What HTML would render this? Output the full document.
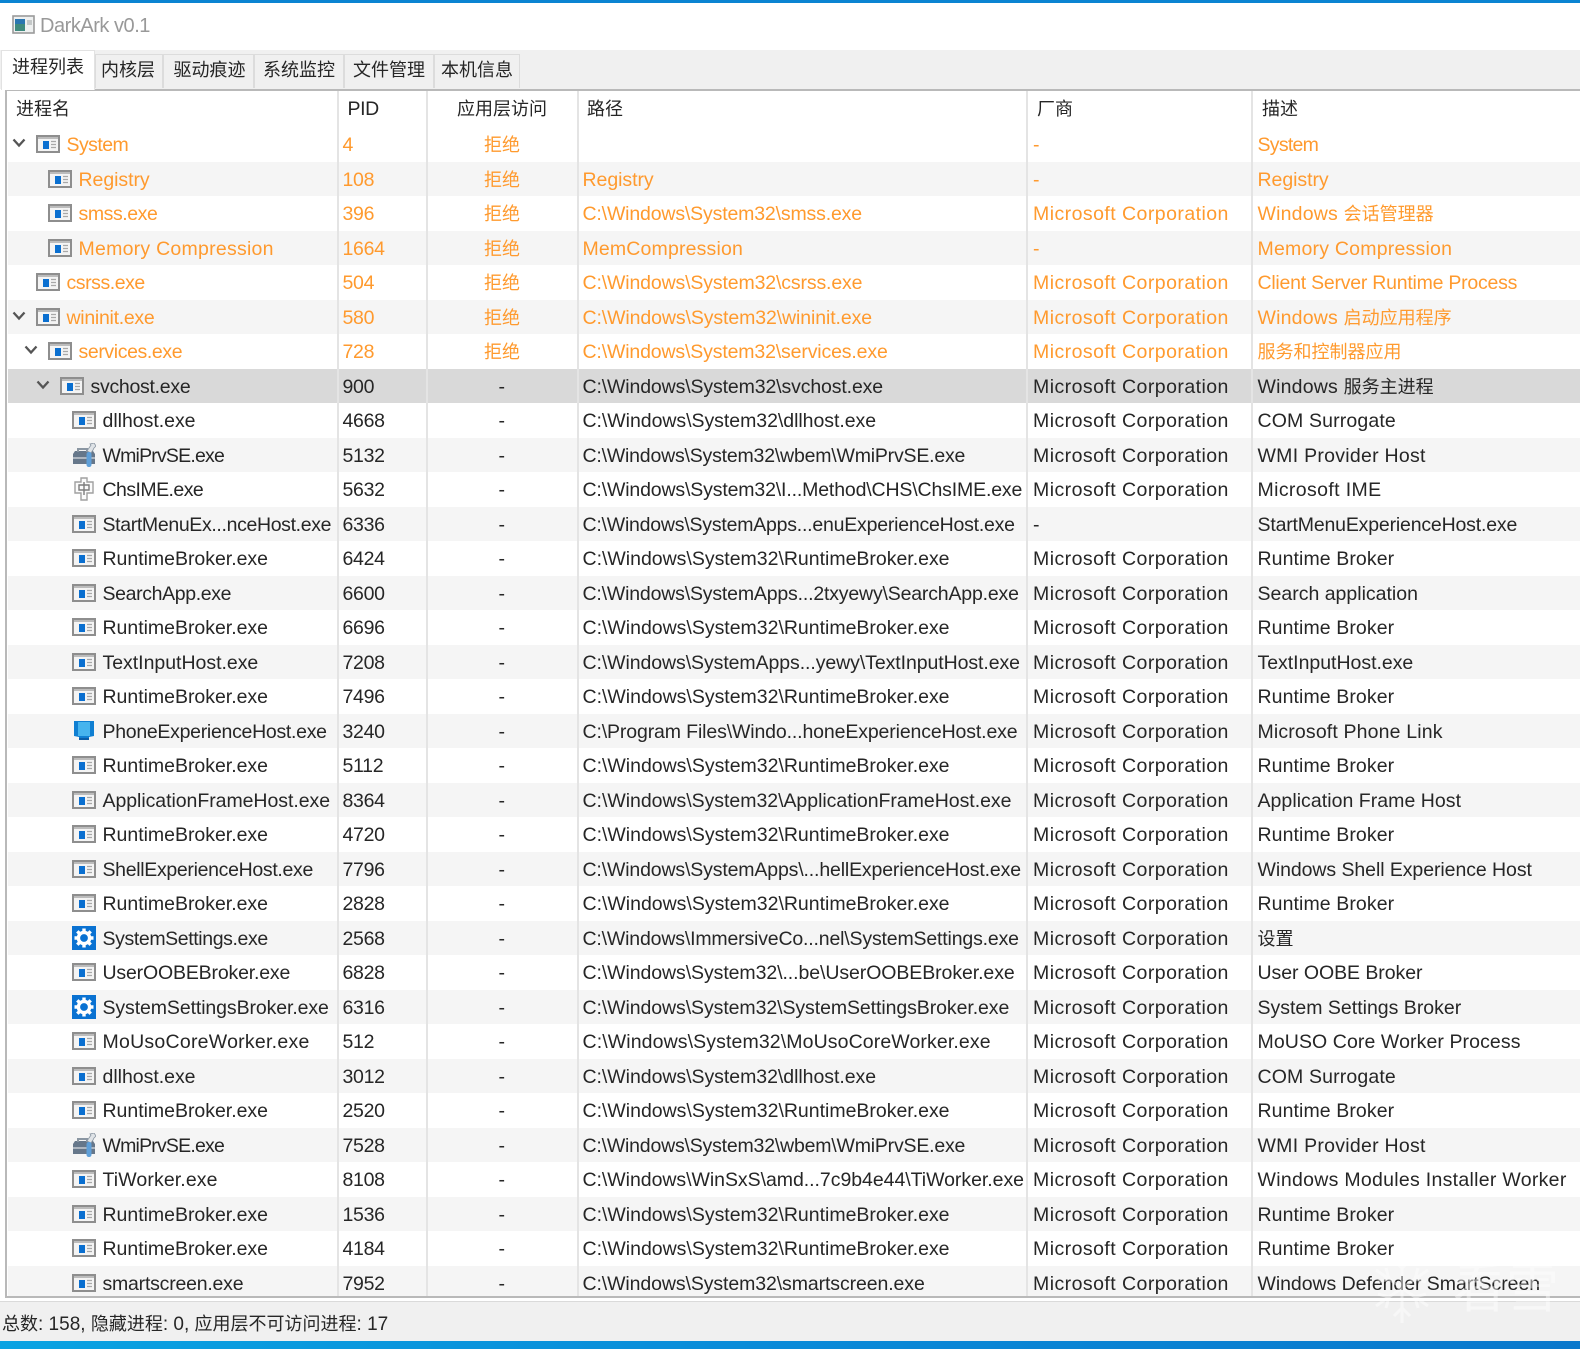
<!DOCTYPE html>
<html lang="zh"><head><meta charset="utf-8"><title>DarkArk v0.1</title>
<style>
html,body{margin:0;padding:0;background:#fff}
#app{position:relative;width:1580px;height:1349px;overflow:hidden;background:#fff;font-family:"Liberation Sans","Noto Sans CJK SC",sans-serif;font-size:19.5px;letter-spacing:.45px;color:#262626;filter:blur(.35px)}
#app>div{position:absolute}
i{font-style:normal;font-size:18px;letter-spacing:0}
.top{left:0;top:0;width:1580px;height:3px;background:#0a84d2}
.ttl{left:40px;top:13px;line-height:26px;font-size:20px;letter-spacing:-.47px;color:#999}
.bar{left:0;top:50px;width:1580px;height:39px;background:#f0f0f0}
.tab{top:54px;height:34px;line-height:30px;background:#f0f0f0;border:1px solid #dcdcdc;border-bottom:0;box-sizing:border-box;text-align:center;color:#262626;font-size:18px;letter-spacing:0}
.tab.on{top:50px;height:40px;background:#fff;line-height:32px;border-color:#e2e2e2}
.frame{left:5px;top:89px;width:1580px;height:1209px;border:2px solid #b9b9b9;box-sizing:border-box;background:#fff}
.hd{top:92px;height:35px;line-height:35px;color:#262626}
.list{left:8px;top:127px;width:1572px;height:1169px;overflow:hidden}
.r{position:absolute;left:0;width:1572px;height:34.5px;line-height:34.5px;white-space:nowrap}
.r:nth-child(even){background:#f5f5f5}
.r.o{color:#ff9a2e}
.r.s{background:#d9d9d9!important}
.r span{position:absolute;top:1px}
.r svg{position:absolute;top:8px}
.n{letter-spacing:-.02px}
.p{left:334.5px;letter-spacing:-.3px}.a{left:434px;width:120px;text-align:center}.f{left:574.5px;letter-spacing:-.01px}.v{left:1025px}.d{left:1249.5px;letter-spacing:.09px}
.d0 .n{left:58.5px}.d0 .ic{left:28px}.d0 .ar{left:4px}
.d1 .n{left:70.5px}.d1 .ic{left:40px}.d1 .ar{left:16px}
.d2 .n{left:82.5px}.d2 .ic{left:52px}.d2 .ar{left:28px}
.d3 .n{left:94.5px}.d3 .ic{left:64px}
.sep{top:91px;width:2px;height:1205px;background:#e4e4e4}
.line2{left:0;top:1301px;width:1580px;height:1px;background:#dadada}
.st{left:0;top:1302px;width:1580px;height:39px;background:#f0f0f0;line-height:44px;color:#262626;padding-left:2px;font-size:19px;letter-spacing:0}
.bt{left:0;top:1341px;width:1580px;height:8px;background:linear-gradient(90deg,#0aa3e2,#0a8ad8 50%,#0a78cc)}
.wm{left:1453px;top:1252px;font-size:53px;letter-spacing:0;color:rgba(255,255,255,.45);line-height:66px;white-space:nowrap;font-family:"Noto Sans CJK SC",sans-serif}
.wmf{left:1373px;top:1252px}
</style></head><body><div id="app">
<svg width="0" height="0" style="position:absolute"><defs>
<symbol id="w" viewBox="0 0 24 18"><rect x="1" y="1" width="22" height="16" fill="#f4f4f4" stroke="#8e8e8e" stroke-width="2"/><rect x="2" y="2" width="20" height="2" fill="#bcbcbc"/><rect x="7" y="6" width="6" height="8" fill="#0a6fd0"/><path d="M15 6.5h5M15 9.5h5M15 12.5h5" stroke="#a8a8a8" stroke-width="1.2"/></symbol>
<symbol id="t" viewBox="0 0 24 24"><path d="M1 11l2-3h18l2 3v10H1z" fill="#66778a"/><path d="M1 15h22" stroke="#c6ccd2" stroke-width="1.4"/><path d="M6 9V6h9v3" fill="none" stroke="#8a96a2" stroke-width="2"/><path d="M15 8l4-6-1-1 4-1 2 3-2 2-1 2-2 3z" fill="#dfe3e7" stroke="#8a96a2" stroke-width=".8"/><rect x="14.5" y="9" width="5" height="15" rx="2.2" fill="#5f9fd8"/></symbol>
<symbol id="m" viewBox="0 0 24 24"><path d="M9 1h6v4h6v11h-6v7H9v-7H3V5h6z" fill="#fbfbfb" stroke="#a0a0a0" stroke-width="1.4"/><path d="M7 8h10v5H7zM12 5v13" fill="none" stroke="#7d7d7d" stroke-width="1.4"/></symbol>
<symbol id="h" viewBox="0 0 24 24"><path d="M2 2h20v15l-5 1v3H7v-3l-5-1z" fill="#0f7fd2"/><rect x="6" y="3" width="12" height="14" fill="#46b4ee"/><path d="M7 20h10" stroke="#0b5ea8" stroke-width="2"/></symbol>
<symbol id="g" viewBox="0 0 24 24"><rect width="24" height="24" fill="#0a72d2"/><circle cx="12" cy="12" r="5.6" fill="none" stroke="#fff" stroke-width="3.4"/><path d="M12 2.5v4M12 17.5v4M2.5 12h4M17.5 12h4M5.3 5.3l2.8 2.8M15.9 15.9l2.8 2.8M18.7 5.3l-2.8 2.8M8.1 15.9l-2.8 2.8" stroke="#fff" stroke-width="3.4"/></symbol>
<symbol id="ar" viewBox="0 0 14 10"><path d="M1.5 1.5L7 7.5l5.5-6" fill="none" stroke="#555" stroke-width="2.3"/></symbol>
</defs></svg>

<div class="top"></div>
<div style="left:12px;top:15px;width:23px;height:19px"><svg width="23" height="19" viewBox="0 0 23 19" style="display:block"><rect x="1" y="1" width="21" height="17" fill="#eef0f0" stroke="#9a9a9a" stroke-width="1.6"/><rect x="3" y="4" width="10" height="12" fill="#3f8a7e"/><rect x="3" y="4" width="10" height="5" fill="#2a76b0"/><rect x="15" y="5" width="5" height="5" fill="#c4c8c8"/></svg></div>
<div class="ttl">DarkArk v0.1</div>
<div class="bar"></div>
<div class="tab" style="left:95px;width:68px;padding-right:2px">内核层</div>
<div class="tab" style="left:163px;width:91px;padding-left:2px">驱动痕迹</div>
<div class="tab" style="left:254px;width:90px">系统监控</div>
<div class="tab" style="left:344px;width:90px">文件管理</div>
<div class="tab" style="left:434px;width:86px">本机信息</div>
<div class="frame"></div>
<div class="tab on" style="left:1px;width:94px">进程列表</div>

<div class="hd" style="left:16px"><i>进程名</i></div>
<div class="hd" style="left:347.5px;letter-spacing:-.4px">PID</div>
<div class="hd" style="left:442px;width:120px;text-align:center"><i>应用层访问</i></div>
<div class="hd" style="left:587px"><i>路径</i></div>
<div class="hd" style="left:1037px"><i>厂商</i></div>
<div class="hd" style="left:1262px"><i>描述</i></div>

<div class="list">
<div class="r o d0" style="top:0"><svg class="ar" width="14" height="10" style="top:11px"><use href="#ar"/></svg><svg class="ic" width="24" height="18"><use href="#w"/></svg><span class="n" style="letter-spacing:-.55px">System</span><span class="p">4</span><span class="a"><i>拒绝</i></span><span class="f"></span><span class="v">-</span><span class="d" style="letter-spacing:-.72px">System</span></div>
<div class="r o d1" style="top:34.5px"><svg class="ic" width="24" height="18"><use href="#w"/></svg><span class="n" style="letter-spacing:-.05px">Registry</span><span class="p">108</span><span class="a"><i>拒绝</i></span><span class="f" style="letter-spacing:-.05px">Registry</span><span class="v">-</span><span class="d" style="letter-spacing:-.05px">Registry</span></div>
<div class="r o d1" style="top:69px"><svg class="ic" width="24" height="18"><use href="#w"/></svg><span class="n" style="letter-spacing:-.43px">smss.exe</span><span class="p">396</span><span class="a"><i>拒绝</i></span><span class="f" style="letter-spacing:-.16px">C:\Windows\System32\smss.exe</span><span class="v">Microsoft Corporation</span><span class="d" style="letter-spacing:.2px">Windows <i>会话管理器</i></span></div>
<div class="r o d1" style="top:103.5px"><svg class="ic" width="24" height="18"><use href="#w"/></svg><span class="n" style="letter-spacing:.25px">Memory Compression</span><span class="p">1664</span><span class="a"><i>拒绝</i></span><span class="f" style="letter-spacing:.16px">MemCompression</span><span class="v">-</span><span class="d" style="letter-spacing:.22px">Memory Compression</span></div>
<div class="r o d0" style="top:138px"><svg class="ic" width="24" height="18"><use href="#w"/></svg><span class="n" style="letter-spacing:-.45px">csrss.exe</span><span class="p">504</span><span class="a"><i>拒绝</i></span><span class="f" style="letter-spacing:-.14px">C:\Windows\System32\csrss.exe</span><span class="v">Microsoft Corporation</span><span class="d" style="letter-spacing:-.24px">Client Server Runtime Process</span></div>
<div class="r o d0" style="top:172.5px"><svg class="ar" width="14" height="10" style="top:11px"><use href="#ar"/></svg><svg class="ic" width="24" height="18"><use href="#w"/></svg><span class="n" style="letter-spacing:-.28px">wininit.exe</span><span class="p">580</span><span class="a"><i>拒绝</i></span><span class="f" style="letter-spacing:-.1px">C:\Windows\System32\wininit.exe</span><span class="v">Microsoft Corporation</span><span class="d" style="letter-spacing:.2px">Windows <i>启动应用程序</i></span></div>
<div class="r o d1" style="top:207px"><svg class="ar" width="14" height="10" style="top:11px"><use href="#ar"/></svg><svg class="ic" width="24" height="18"><use href="#w"/></svg><span class="n" style="letter-spacing:-.39px">services.exe</span><span class="p">728</span><span class="a"><i>拒绝</i></span><span class="f" style="letter-spacing:-.15px">C:\Windows\System32\services.exe</span><span class="v">Microsoft Corporation</span><span class="d"><i>服务和控制器应用</i></span></div>
<div class="r s d2" style="top:241.5px"><svg class="ar" width="14" height="10" style="top:11px"><use href="#ar"/></svg><svg class="ic" width="24" height="18"><use href="#w"/></svg><span class="n" style="letter-spacing:-.28px">svchost.exe</span><span class="p">900</span><span class="a">-</span><span class="f" style="letter-spacing:-.13px">C:\Windows\System32\svchost.exe</span><span class="v">Microsoft Corporation</span><span class="d" style="letter-spacing:.2px">Windows <i>服务主进程</i></span></div>
<div class="r d3" style="top:276px"><svg class="ic" width="24" height="18"><use href="#w"/></svg><span class="n">dllhost.exe</span><span class="p">4668</span><span class="a">-</span><span class="f" style="letter-spacing:-.04px">C:\Windows\System32\dllhost.exe</span><span class="v">Microsoft Corporation</span><span class="d" style="letter-spacing:.14px">COM Surrogate</span></div>
<div class="r d3" style="top:310.5px"><svg class="ic" width="24" height="24" style="top:5px"><use href="#t"/></svg><span class="n" style="letter-spacing:-.8px">WmiPrvSE.exe</span><span class="p">5132</span><span class="a">-</span><span class="f" style="letter-spacing:-.2px">C:\Windows\System32\wbem\WmiPrvSE.exe</span><span class="v">Microsoft Corporation</span><span class="d" style="letter-spacing:.27px">WMI Provider Host</span></div>
<div class="r d3" style="top:345px"><svg class="ic" width="24" height="24" style="top:5px"><use href="#m"/></svg><span class="n" style="letter-spacing:-.55px">ChsIME.exe</span><span class="p">5632</span><span class="a">-</span><span class="f" style="letter-spacing:-.15px">C:\Windows\System32\I...Method\CHS\ChsIME.exe</span><span class="v">Microsoft Corporation</span><span class="d" style="letter-spacing:.37px">Microsoft IME</span></div>
<div class="r d3" style="top:379.5px"><svg class="ic" width="24" height="18"><use href="#w"/></svg><span class="n" style="letter-spacing:-.35px">StartMenuEx...nceHost.exe</span><span class="p">6336</span><span class="a">-</span><span class="f" style="letter-spacing:-.22px">C:\Windows\SystemApps...enuExperienceHost.exe</span><span class="v">-</span><span class="d" style="letter-spacing:-.18px">StartMenuExperienceHost.exe</span></div>
<div class="r d3" style="top:414px"><svg class="ic" width="24" height="18"><use href="#w"/></svg><span class="n">RuntimeBroker.exe</span><span class="p">6424</span><span class="a">-</span><span class="f">C:\Windows\System32\RuntimeBroker.exe</span><span class="v">Microsoft Corporation</span><span class="d">Runtime Broker</span></div>
<div class="r d3" style="top:448.5px"><svg class="ic" width="24" height="18"><use href="#w"/></svg><span class="n" style="letter-spacing:-.36px">SearchApp.exe</span><span class="p">6600</span><span class="a">-</span><span class="f" style="letter-spacing:-.18px">C:\Windows\SystemApps...2txyewy\SearchApp.exe</span><span class="v">Microsoft Corporation</span><span class="d" style="letter-spacing:0">Search application</span></div>
<div class="r d3" style="top:483px"><svg class="ic" width="24" height="18"><use href="#w"/></svg><span class="n">RuntimeBroker.exe</span><span class="p">6696</span><span class="a">-</span><span class="f">C:\Windows\System32\RuntimeBroker.exe</span><span class="v">Microsoft Corporation</span><span class="d">Runtime Broker</span></div>
<div class="r d3" style="top:517.5px"><svg class="ic" width="24" height="18"><use href="#w"/></svg><span class="n">TextInputHost.exe</span><span class="p">7208</span><span class="a">-</span><span class="f" style="letter-spacing:-.08px">C:\Windows\SystemApps...yewy\TextInputHost.exe</span><span class="v">Microsoft Corporation</span><span class="d" style="letter-spacing:-.02px">TextInputHost.exe</span></div>
<div class="r d3" style="top:552px"><svg class="ic" width="24" height="18"><use href="#w"/></svg><span class="n">RuntimeBroker.exe</span><span class="p">7496</span><span class="a">-</span><span class="f">C:\Windows\System32\RuntimeBroker.exe</span><span class="v">Microsoft Corporation</span><span class="d">Runtime Broker</span></div>
<div class="r d3" style="top:586.5px"><svg class="ic" width="24" height="24" style="top:5px"><use href="#h"/></svg><span class="n" style="letter-spacing:-.29px">PhoneExperienceHost.exe</span><span class="p">3240</span><span class="a">-</span><span class="f" style="letter-spacing:-.13px">C:\Program Files\Windo...honeExperienceHost.exe</span><span class="v">Microsoft Corporation</span><span class="d" style="letter-spacing:.15px">Microsoft Phone Link</span></div>
<div class="r d3" style="top:621px"><svg class="ic" width="24" height="18"><use href="#w"/></svg><span class="n">RuntimeBroker.exe</span><span class="p">5112</span><span class="a">-</span><span class="f">C:\Windows\System32\RuntimeBroker.exe</span><span class="v">Microsoft Corporation</span><span class="d">Runtime Broker</span></div>
<div class="r d3" style="top:655.5px"><svg class="ic" width="24" height="18"><use href="#w"/></svg><span class="n" style="letter-spacing:-.05px">ApplicationFrameHost.exe</span><span class="p">8364</span><span class="a">-</span><span class="f" style="letter-spacing:-.03px">C:\Windows\System32\ApplicationFrameHost.exe</span><span class="v">Microsoft Corporation</span><span class="d" style="letter-spacing:.04px">Application Frame Host</span></div>
<div class="r d3" style="top:690px"><svg class="ic" width="24" height="18"><use href="#w"/></svg><span class="n">RuntimeBroker.exe</span><span class="p">4720</span><span class="a">-</span><span class="f">C:\Windows\System32\RuntimeBroker.exe</span><span class="v">Microsoft Corporation</span><span class="d">Runtime Broker</span></div>
<div class="r d3" style="top:724.5px"><svg class="ic" width="24" height="18"><use href="#w"/></svg><span class="n" style="letter-spacing:-.32px">ShellExperienceHost.exe</span><span class="p">7796</span><span class="a">-</span><span class="f" style="letter-spacing:-.15px">C:\Windows\SystemApps\...hellExperienceHost.exe</span><span class="v">Microsoft Corporation</span><span class="d" style="letter-spacing:-.07px">Windows Shell Experience Host</span></div>
<div class="r d3" style="top:759px"><svg class="ic" width="24" height="18"><use href="#w"/></svg><span class="n">RuntimeBroker.exe</span><span class="p">2828</span><span class="a">-</span><span class="f">C:\Windows\System32\RuntimeBroker.exe</span><span class="v">Microsoft Corporation</span><span class="d">Runtime Broker</span></div>
<div class="r d3" style="top:793.5px"><svg class="ic" width="24" height="24" style="top:5px"><use href="#g"/></svg><span class="n" style="letter-spacing:-.39px">SystemSettings.exe</span><span class="p">2568</span><span class="a">-</span><span class="f" style="letter-spacing:-.17px">C:\Windows\ImmersiveCo...nel\SystemSettings.exe</span><span class="v">Microsoft Corporation</span><span class="d"><i>设置</i></span></div>
<div class="r d3" style="top:828px"><svg class="ic" width="24" height="18"><use href="#w"/></svg><span class="n" style="letter-spacing:-.17px">UserOOBEBroker.exe</span><span class="p">6828</span><span class="a">-</span><span class="f" style="letter-spacing:-.08px">C:\Windows\System32\...be\UserOOBEBroker.exe</span><span class="v">Microsoft Corporation</span><span class="d" style="letter-spacing:-.05px">User OOBE Broker</span></div>
<div class="r d3" style="top:862.5px"><svg class="ic" width="24" height="24" style="top:5px"><use href="#g"/></svg><span class="n" style="letter-spacing:-.1px">SystemSettingsBroker.exe</span><span class="p">6316</span><span class="a">-</span><span class="f" style="letter-spacing:-.08px">C:\Windows\System32\SystemSettingsBroker.exe</span><span class="v">Microsoft Corporation</span><span class="d" style="letter-spacing:0">System Settings Broker</span></div>
<div class="r d3" style="top:897px"><svg class="ic" width="24" height="18"><use href="#w"/></svg><span class="n" style="letter-spacing:.25px">MoUsoCoreWorker.exe</span><span class="p">512</span><span class="a">-</span><span class="f" style="letter-spacing:.11px">C:\Windows\System32\MoUsoCoreWorker.exe</span><span class="v">Microsoft Corporation</span><span class="d">MoUSO Core Worker Process</span></div>
<div class="r d3" style="top:931.5px"><svg class="ic" width="24" height="18"><use href="#w"/></svg><span class="n">dllhost.exe</span><span class="p">3012</span><span class="a">-</span><span class="f" style="letter-spacing:-.04px">C:\Windows\System32\dllhost.exe</span><span class="v">Microsoft Corporation</span><span class="d" style="letter-spacing:.14px">COM Surrogate</span></div>
<div class="r d3" style="top:966px"><svg class="ic" width="24" height="18"><use href="#w"/></svg><span class="n">RuntimeBroker.exe</span><span class="p">2520</span><span class="a">-</span><span class="f">C:\Windows\System32\RuntimeBroker.exe</span><span class="v">Microsoft Corporation</span><span class="d">Runtime Broker</span></div>
<div class="r d3" style="top:1000.5px"><svg class="ic" width="24" height="24" style="top:5px"><use href="#t"/></svg><span class="n" style="letter-spacing:-.8px">WmiPrvSE.exe</span><span class="p">7528</span><span class="a">-</span><span class="f" style="letter-spacing:-.2px">C:\Windows\System32\wbem\WmiPrvSE.exe</span><span class="v">Microsoft Corporation</span><span class="d" style="letter-spacing:.27px">WMI Provider Host</span></div>
<div class="r d3" style="top:1035px"><svg class="ic" width="24" height="18"><use href="#w"/></svg><span class="n" style="letter-spacing:.11px">TiWorker.exe</span><span class="p">8108</span><span class="a">-</span><span class="f" style="letter-spacing:-.04px">C:\Windows\WinSxS\amd...7c9b4e44\TiWorker.exe</span><span class="v">Microsoft Corporation</span><span class="d" style="letter-spacing:.29px">Windows Modules Installer Worker</span></div>
<div class="r d3" style="top:1069.5px"><svg class="ic" width="24" height="18"><use href="#w"/></svg><span class="n">RuntimeBroker.exe</span><span class="p">1536</span><span class="a">-</span><span class="f">C:\Windows\System32\RuntimeBroker.exe</span><span class="v">Microsoft Corporation</span><span class="d">Runtime Broker</span></div>
<div class="r d3" style="top:1104px"><svg class="ic" width="24" height="18"><use href="#w"/></svg><span class="n">RuntimeBroker.exe</span><span class="p">4184</span><span class="a">-</span><span class="f">C:\Windows\System32\RuntimeBroker.exe</span><span class="v">Microsoft Corporation</span><span class="d">Runtime Broker</span></div>
<div class="r d3" style="top:1138.5px"><svg class="ic" width="24" height="18"><use href="#w"/></svg><span class="n" style="letter-spacing:-.22px">smartscreen.exe</span><span class="p">7952</span><span class="a">-</span><span class="f" style="letter-spacing:-.1px">C:\Windows\System32\smartscreen.exe</span><span class="v">Microsoft Corporation</span><span class="d" style="letter-spacing:-.05px">Windows Defender SmartScreen</span></div>
</div>

<div class="sep" style="left:337px"></div>
<div class="sep" style="left:426px"></div>
<div class="sep" style="left:577px"></div>
<div class="sep" style="left:1026px"></div>
<div class="sep" style="left:1251px"></div>

<div class="line2"></div>
<div class="st"><i>总数</i>: 158, <i>隐藏进程</i>: 0, <i>应用层不可访问进程</i>: 17</div>
<div class="bt"></div>
<div class="wmf"><svg width="58" height="72" viewBox="0 0 58 72" fill="none" stroke="rgba(255,255,255,.45)" stroke-width="3" style="display:block"><path d="M29 1v70M3 18l52 36M55 18L3 54M21 8l8 8 8-8M21 64l8-8 8 8M5 30l11-3-3-11M53 30l-11-3 3-11M5 42l11 3-3 11M53 42l-11 3 3 11"/></svg></div>
<div class="wm">看雪</div>
</div></body></html>
